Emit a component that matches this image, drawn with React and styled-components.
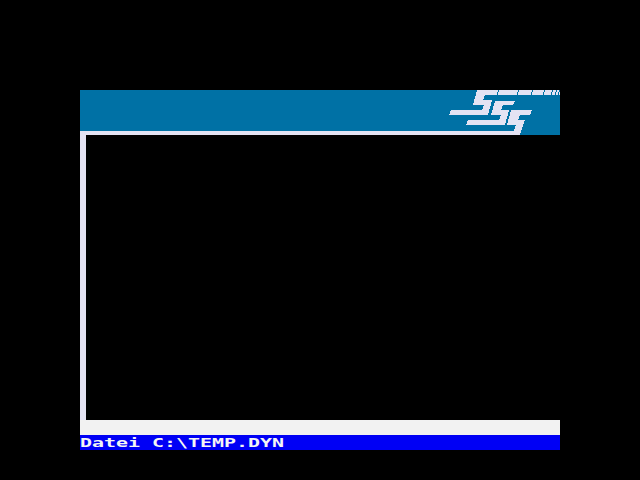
import React from "react";
import styled, { createGlobalStyle } from "styled-components";

const GlobalStyle = createGlobalStyle`
  body { margin: 0; background: #000; overflow: hidden; }
`;
const Screen = styled.main`
  box-sizing: border-box;
  width: 640px;
  height: 480px;
  padding: 90px 80px 30px;
  background: #000;
  display: flex;
  flex-direction: column;
`;
const Header = styled.header`
  height: 45px;
  background: #0071a5;
  display: flex;
`;
const Logo = styled.svg`
  display: block;
  width: 480px;
  height: 45px;
`;
const Workspace = styled.section`
  box-sizing: border-box;
  height: 285px;
  border-left: 6px solid #e4e3f3;
`;
const MessageLine = styled.div`
  height: 15px;
  background: #f2f2f2;
`;
const StatusLine = styled.footer`
  height: 15px;
  background: #0000f5;
  overflow: hidden;
`;
const FileName = styled.span`
  display: block;
  width: max-content;
  font: bold 13px/15px "DejaVu Sans Mono", monospace;
  color: #f5f5f5;
  white-space: pre;
  transform: scaleX(1.533);
  transform-origin: left;
`;

export default function App() {
  return (
    <Screen>
      <GlobalStyle />
      <Header>
        <Logo viewBox="0 0 480 45" shapeRendering="crispEdges" fill="#e4e3f3">
          <path d="M397 0H480V5H405L403 10H412L408 25H369L371 20H402L404 15H393Z" />
          <path d="M415 11H435L433 15H423L421 20H429L425 35H386L388 30H419L421 25H411Z" />
          <path d="M431 20H452L450 25H440L438 30H445L440 45H0V41H434L436 35H427Z" />
          <path d="M418.5 0L417.5 5M438.5 0L437.5 5M452.5 0L451.5 5M464.5 0L463.5 5M472.5 0L471.5 5M476.5 0L475.5 5M479.5 0L478.5 5" stroke="#0071a5" strokeWidth="1" />
        </Logo>
      </Header>
      <Workspace />
      <MessageLine />
      <StatusLine><FileName>{"Datei C:\\TEMP.DYN"}</FileName></StatusLine>
    </Screen>
  );
}
